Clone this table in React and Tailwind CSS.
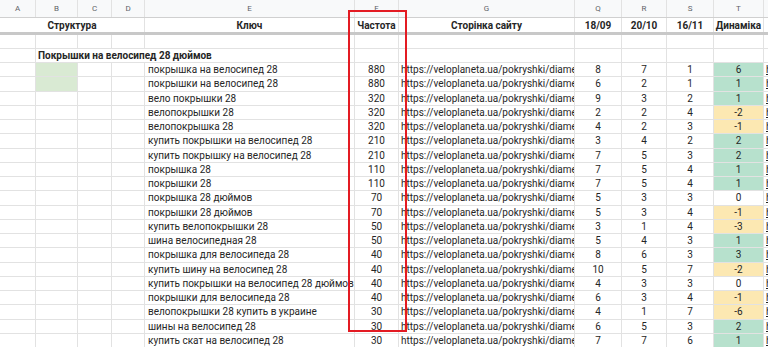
import React from "react";

const cols = [
  { key: "A", w: "w-[36px]" },
  { key: "B", w: "w-[42px]" },
  { key: "C", w: "w-[34px]" },
  { key: "D", w: "w-[33px]" },
  { key: "E", w: "w-[210px]" },
  { key: "F", w: "w-[44px]" },
  { key: "G", w: "w-[176px]" },
  { key: "Q", w: "w-[47px]" },
  { key: "R", w: "w-[45px]" },
  { key: "S", w: "w-[47px]" },
  { key: "T", w: "w-[50px]" },
  { key: "U", w: "w-[40px]" },
];

const url = "https://veloplaneta.ua/pokryshki/diametr";

const rows = [
  ["покрышка на велосипед 28", 880, 8, 7, 1, 6],
  ["покрышки на велосипед 28", 880, 6, 2, 1, 1],
  ["вело покрышки 28", 320, 9, 3, 2, 1],
  ["велопокрышки 28", 320, 2, 2, 4, -2],
  ["велопокрышка 28", 320, 4, 2, 3, -1],
  ["купить покрышки на велосипед 28", 210, 3, 4, 2, 2],
  ["купить покрышку на велосипед 28", 210, 7, 5, 3, 2],
  ["покрышка 28", 110, 7, 5, 4, 1],
  ["покрышки 28", 110, 7, 5, 4, 1],
  ["покрышка 28 дюймов", 70, 5, 3, 3, 0],
  ["покрышки 28 дюймов", 70, 5, 3, 4, -1],
  ["купить велопокрышки 28", 50, 3, 1, 4, -3],
  ["шина велосипедная 28", 50, 5, 4, 3, 1],
  ["покрышка для велосипеда 28", 40, 8, 6, 3, 3],
  ["купить шину на велосипед 28", 40, 10, 5, 7, -2],
  ["купить покрышки на велосипед 28 дюймов", 40, 4, 3, 3, 0],
  ["покрышки для велосипеда 28", 40, 6, 3, 4, -1],
  ["велопокрышки 28 купить в украине", 30, 4, 1, 7, -6],
  ["шины на велосипед 28", 30, 6, 5, 3, 2],
  ["купить скат на велосипед 28", 30, 7, 7, 6, 1],
];

const cell = "h-full shrink-0 border-r border-[#e2e2e2] flex items-center overflow-hidden whitespace-nowrap";

function dynBg(v) {
  if (v > 0) return "bg-[#b7e1cd]";
  if (v < 0) return "bg-[#fce8b2]";
  return "bg-white";
}

export default function App() {
  return (
    <div
      className="relative w-[768px] h-[347px] overflow-hidden bg-white text-[10px] text-[#262626]"
      style={{ fontFamily: 'Roboto, "Noto Sans", sans-serif' }}
    >
      {/* column letters */}
      <div className="flex h-[18px] bg-[#f8f9fa] border-b border-[#d0d0d0] text-[8px] text-[#5f6368]">
        {cols.map((c) => (
          <div key={c.key} className={`${cell} ${c.w} justify-center border-[#dadada]`}>
            {c.key === "U" ? "" : c.key}
          </div>
        ))}
      </div>

      {/* header */}
      <div className="flex h-[14px] font-bold">
        <div className={`${cell} w-[145px] justify-center`}>Структура</div>
        <div className={`${cell} w-[210px] justify-center`}>Ключ</div>
        <div className={`${cell} w-[44px] justify-center`}>Частота</div>
        <div className={`${cell} w-[176px] justify-center`}>Сторінка сайту</div>
        <div className={`${cell} w-[47px] justify-center`}>18/09</div>
        <div className={`${cell} w-[45px] justify-center`}>20/10</div>
        <div className={`${cell} w-[47px] justify-center`}>16/11</div>
        <div className={`${cell} w-[50px] justify-center`}>Динаміка</div>
        <div className={`${cell} w-[40px]`}></div>
      </div>
      <div className="h-[3px] bg-[#c8c8c8]"></div>

      {/* empty row */}
      <div className="flex h-[14px] border-b border-[#e2e2e2]">
        {cols.map((c) => (
          <div key={c.key} className={`${cell} ${c.w}`}></div>
        ))}
      </div>

      {/* section title */}
      <div className="flex h-[14px] border-b border-[#e2e2e2]">
        <div className={`${cell} w-[36px]`}></div>
        <div className="h-full shrink-0 w-[319px] border-r border-[#e2e2e2] flex items-center pl-[2px] font-bold whitespace-nowrap">
          Покрышки на велосипед 28 дюймов
        </div>
        {cols.slice(5).map((c) => (
          <div key={c.key} className={`${cell} ${c.w}`}></div>
        ))}
      </div>

      {/* data */}
      {rows.map((r, i) => (
        <div key={i} className="flex h-[14.25px] border-b border-[#e2e2e2]">
          <div className={`${cell} w-[36px]`}></div>
          <div className={`${cell} w-[42px] ${i < 2 ? "bg-[#d9ead3] border-[#d9ead3]" : ""}`}></div>
          <div className={`${cell} w-[34px]`}></div>
          <div className={`${cell} w-[33px]`}></div>
          <div className={`${cell} w-[210px] pl-[3px]`}>{r[0]}</div>
          <div className={`${cell} w-[44px] justify-center`}>{r[1]}</div>
          <div className={`${cell} w-[176px] pl-[2px]`}>
            <span className="block w-full overflow-hidden">{url}</span>
          </div>
          <div className={`${cell} w-[47px] justify-center`}>{r[2]}</div>
          <div className={`${cell} w-[45px] justify-center`}>{r[3]}</div>
          <div className={`${cell} w-[47px] justify-center`}>{r[4]}</div>
          <div className={`${cell} w-[50px] justify-center ${dynBg(r[5])}`}>{r[5]}</div>
          <div className={`${cell} w-[40px] pl-[2px] underline`}>https://</div>
        </div>
      ))}

      {/* highlight box */}
      <div className="absolute left-[348px] top-[10px] w-[59px] h-[322px] border-2 border-[#e31b23]"></div>
    </div>
  );
}
